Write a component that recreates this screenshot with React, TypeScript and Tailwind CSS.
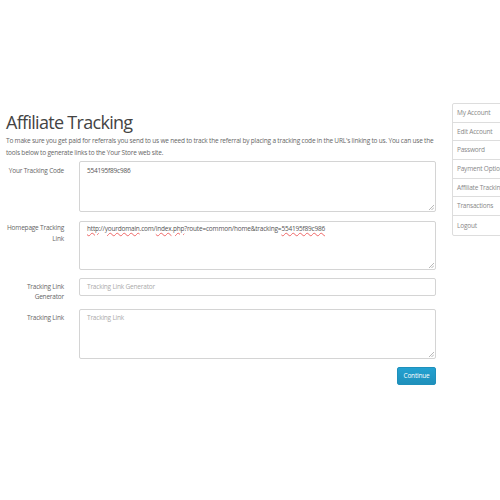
import React from "react";

const Grip = () => (
  <svg className="absolute right-[1px] bottom-[1px]" width="6" height="6" viewBox="0 0 6 6">
    <line x1="1" y1="6" x2="6" y2="1" stroke="#999" strokeWidth="0.7" />
    <line x1="3.5" y1="6" x2="6" y2="3.5" stroke="#999" strokeWidth="0.7" />
  </svg>
);

const Squig = ({ children }: { children: React.ReactNode }) => (
  <span className="underline decoration-wavy decoration-[#e66] decoration-[0.5px] underline-offset-[1px]">
    {children}
  </span>
);

const menu = [
  "My Account",
  "Edit Account",
  "Password",
  "Payment Options",
  "Affiliate Tracking",
  "Transactions",
  "Logout",
];

export default function App() {
  return (
    <div
      className="w-[500px] h-[500px] bg-white overflow-hidden flex items-start pt-[103px] text-[6.5px] tracking-[-0.2px] text-[#666]"
      style={{ fontFamily: '"Open Sans", "Liberation Sans", sans-serif' }}
    >
      <div className="ml-[6px] w-[430px] shrink-0 flex flex-col pt-[8px]">
        <h1 className="text-[18px] leading-[22px] tracking-[-0.7px] text-[#444] font-normal whitespace-nowrap">
          Affiliate Tracking
        </h1>
        <p className="mt-[2px] leading-[12px]">
          To make sure you get paid for referrals you send to us we need to track the referral by placing a tracking code in the URL's linking to us. You can use the tools below to generate links to the Your Store web site.
        </p>

        <div className="mt-[2px] flex">
          <div className="w-[58px] text-right leading-[10.5px] pt-[4.5px]">Your Tracking Code</div>
          <div className="ml-[15px] w-[357px] h-[51px] relative border border-[#d4d4d4] rounded-[2px] pl-[7px] pt-[4px] leading-[10.5px] text-[#555]">
            554195f89c986
            <Grip />
          </div>
        </div>

        <div className="mt-[9px] flex">
          <div className="w-[58px] text-right leading-[10.5px] pt-[2px]">Homepage Tracking Link</div>
          <div className="ml-[15px] w-[357px] h-[49px] relative border border-[#d4d4d4] rounded-[2px] pl-[7px] pt-[2px] leading-[10.5px] text-[#555] whitespace-nowrap">
            <Squig>http</Squig>://<Squig>yourdomain</Squig>.com/<Squig>index</Squig>.<Squig>php</Squig>?route=common/home&amp;tracking=<Squig>554195f89c986</Squig>
            <Grip />
          </div>
        </div>

        <div className="mt-[8px] flex h-[18px] items-start">
          <div className="w-[58px] text-right leading-[10.5px] pt-[3.5px]">Tracking Link Generator</div>
          <div className="ml-[15px] w-[357px] h-[18px] border border-[#d4d4d4] rounded-[2px] pl-[7px] flex items-center text-[#aaa]">
            Tracking Link Generator
          </div>
        </div>

        <div className="mt-[13px] flex">
          <div className="w-[58px] text-right leading-[10.5px] pt-[3.5px]">Tracking Link</div>
          <div className="ml-[15px] w-[357px] h-[50px] relative border border-[#d4d4d4] rounded-[2px] pl-[7px] pt-[3px] leading-[10.5px] text-[#aaa]">
            Tracking Link
            <Grip />
          </div>
        </div>

        <div className="mt-[8px] flex justify-end">
          <div className="w-[39px] h-[18px] rounded-[2px] border border-[#1f90bb] bg-gradient-to-b from-[#23a1d1] to-[#1f90bb] text-white flex items-center justify-center">
            Continue
          </div>
        </div>
      </div>

      <div className="ml-[16px] w-[70px] shrink-0 border border-[#ddd] rounded-[2px] flex flex-col text-[#888]">
        {menu.map((m, i) => (
          <div
            key={m}
            className={`h-[18.7px] flex items-center pl-[4px] whitespace-nowrap ${i < menu.length - 1 ? "border-b border-[#ddd]" : ""}`}
          >
            {m}
          </div>
        ))}
      </div>
    </div>
  );
}
